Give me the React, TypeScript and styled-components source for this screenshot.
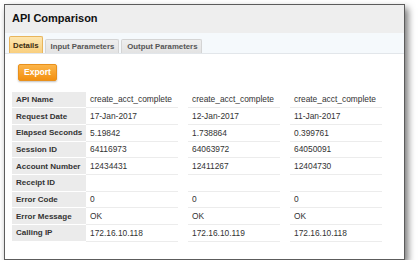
import React from 'react';
import styled, { createGlobalStyle } from 'styled-components';

const GlobalStyle = createGlobalStyle`
  html, body {
    margin: 0;
    padding: 0;
    background: #ffffff;
    font-family: "Liberation Sans", Arial, Helvetica, sans-serif;
  }
`;

const Page = styled.div`
  padding: 4px 0 0 4px;
`;

const Window = styled.div`
  width: 399px;
  height: 254px;
  border: 1px solid #5c5c5c;
  background: #ffffff;
  box-shadow: 3px 4px 7px rgba(0, 0, 0, 0.55);
  display: flex;
  flex-direction: column;
`;

const TitleBar = styled.div`
  height: 28px;
  background: #eeeeee;
  display: flex;
  align-items: center;
  padding-left: 7px;
  padding-bottom: 2px;
  box-sizing: border-box;
  font-size: 11px;
  font-weight: bold;
  color: #111111;
`;

const TabBar = styled.div`
  height: 21px;
  box-sizing: border-box;
  background: #f5f9fc;
  border-bottom: 1px solid #e2e6ea;
  display: flex;
  align-items: flex-end;
  gap: 2px;
  padding-left: 4px;
`;

const Tab = styled.div<{ $active?: boolean }>`
  height: ${(p) => (p.$active ? 17 : 14)}px;
  box-sizing: border-box;
  padding: 0 ${(p) => (p.$active ? 3 : 4)}px 0 ${(p) => (p.$active ? 3 : 5)}px;
  display: flex;
  align-items: center;
  font-size: 7.8px;
  font-weight: bold;
  color: ${(p) => (p.$active ? '#3a2a10' : '#555555')};
  border: 1px solid ${(p) => (p.$active ? '#e8b55c' : '#d4d4d4')};
  border-bottom: none;
  border-radius: 2px 2px 0 0;
  background: ${(p) =>
    p.$active
      ? 'linear-gradient(#fde6b0, #f9cf7e)'
      : 'linear-gradient(#eeeeee, #e3e3e3)'};
`;

const Content = styled.div`
  padding: 7px 0 0 7px;
`;

const Toolbar = styled.div`
  padding-left: 6px;
  margin-bottom: 11px;
`;

const ExportButton = styled.button`
  width: 39px;
  height: 17px;
  border: 1px solid #e8901c;
  border-radius: 2px;
  background: linear-gradient(#fcb54a, #f3900f);
  color: #ffffff;
  font-family: inherit;
  font-size: 8.5px;
  font-weight: bold;
  padding: 0;
  box-shadow: 0 1px 2px rgba(0, 0, 0, 0.25);
`;

const Table = styled.div`
  display: grid;
  grid-template-columns: 74px 102px 102px 102px;
`;

const Row = styled.div`
  display: contents;
`;

const Label = styled.div`
  height: 16.7px;
  box-sizing: border-box;
  background: #ebebeb;
  border-bottom: 1px solid #ffffff;
  display: flex;
  align-items: center;
  padding-left: 4px;
  font-size: 8px;
  font-weight: bold;
  color: #333333;
`;

const Cell = styled.div`
  height: 16.7px;
  box-sizing: border-box;
  margin-right: 10px;
  border-bottom: 1px solid #ececec;
  display: flex;
  align-items: center;
  padding-left: 4px;
  font-size: 8.4px;
  color: #333333;
  white-space: nowrap;
`;

const rows: [string, string, string, string][] = [
  ['API Name', 'create_acct_complete', 'create_acct_complete', 'create_acct_complete'],
  ['Request Date', '17-Jan-2017', '12-Jan-2017', '11-Jan-2017'],
  ['Elapsed Seconds', '5.19842', '1.738864', '0.399761'],
  ['Session ID', '64116973', '64063972', '64050091'],
  ['Account Number', '12434431', '12411267', '12404730'],
  ['Receipt ID', '', '', ''],
  ['Error Code', '0', '0', '0'],
  ['Error Message', 'OK', 'OK', 'OK'],
  ['Calling IP', '172.16.10.118', '172.16.10.119', '172.16.10.118'],
];

export default function App(): JSX.Element {
  return (
    <>
      <GlobalStyle />
      <Page>
        <Window>
          <TitleBar>API Comparison</TitleBar>
          <TabBar>
            <Tab $active>Details</Tab>
            <Tab>Input Parameters</Tab>
            <Tab>Output Parameters</Tab>
          </TabBar>
          <Content>
            <Toolbar>
              <ExportButton>Export</ExportButton>
            </Toolbar>
            <Table>
              {rows.map(([label, a, b, c]) => (
                <Row key={label}>
                  <Label>{label}</Label>
                  <Cell>{a}</Cell>
                  <Cell>{b}</Cell>
                  <Cell>{c}</Cell>
                </Row>
              ))}
            </Table>
          </Content>
        </Window>
      </Page>
    </>
  );
}
